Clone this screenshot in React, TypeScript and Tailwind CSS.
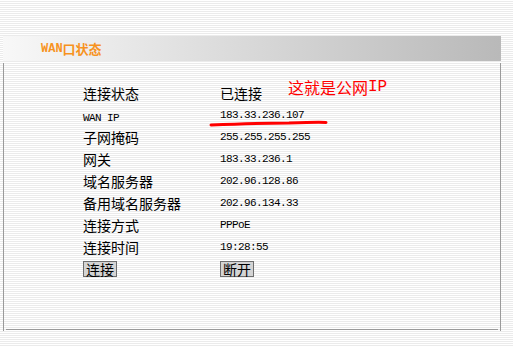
const rows: [string, string][] = [
  ['连接状态', '已连接'],
  ['WAN IP', '183.33.236.107'],
  ['子网掩码', '255.255.255.255'],
  ['网关', '183.33.236.1'],
  ['域名服务器', '202.96.128.86'],
  ['备用域名服务器', '202.96.134.33'],
  ['连接方式', 'PPPoE'],
  ['连接时间', '19:28:55'],
];

const cjk = "font-['Noto_Sans_CJK_SC',sans-serif]";
const mono = "font-['Liberation_Mono','Noto_Sans_CJK_SC',monospace]";

function Cell({ text }: { text: string }) {
  // ascii-only values are rendered in the narrow mono face
  const ascii = /^[\x20-\x7e]+$/.test(text);
  return ascii ? (
    <span className={`${mono} text-[11px] tracking-[-0.6px] text-black`}>{text}</span>
  ) : (
    <span className={`${cjk} text-[14px] text-black`}>{text}</span>
  );
}

function Btn({ children }: { children: React.ReactNode }) {
  return (
    <button
      className={`${cjk} w-[34px] h-[16px] bg-[#d4d4d4] border border-[#6e6e6e] text-[14px] leading-none text-black flex items-center justify-center`}
    >
      {children}
    </button>
  );
}

export default function App() {
  return (
    <div className="relative w-[513px] h-[347px] overflow-hidden bg-[repeating-linear-gradient(to_bottom,#ffffff_0px,#ffffff_1px,#ebebeb_1px,#ebebeb_2px)] pt-[36px]">
      <div className="ml-[3px] w-[498px] h-[25px] bg-gradient-to-r from-[#f8f8f8] to-[#b9b9b9] flex items-center pl-[38px]">
        <span className={`${mono} font-bold text-[12px] text-[#f7931e]`}>WAN</span>
        <span className={`${cjk} font-bold text-[13px] text-[#f7931e]`}>口状态</span>
      </div>

      <div className="relative mt-[2px] ml-[3px] w-[498px] h-[268px] border-l border-r border-[#9a9a9a] flex flex-col">
        <div className="flex-1 pt-[19px] pl-[79px]">
          {rows.map(([k, v]) => (
            <div key={k} className="h-[22px] flex items-center">
              <div className="w-[137px]">
                <Cell text={k} />
              </div>
              <Cell text={v} />
            </div>
          ))}
          <div className="h-[22px] flex items-center">
            <div className="w-[137px]">
              <Btn>连接</Btn>
            </div>
            <Btn>断开</Btn>
          </div>
        </div>
        <div className="mx-[2px] mb-[1px] border-b border-[#9a9a9a]" />

        {/* hand-drawn annotation */}
        <div className="absolute left-[284px] top-[16px] flex items-center text-[#ff0000] text-[16px] leading-none">
          <span className={cjk}>这就是公网</span>
          <span className={mono}>IP</span>
        </div>
        <svg className="absolute left-0 top-0" width="498" height="268">
          <path
            d="M207 62 C 230 61, 260 60, 285 60 C 300 59.5, 315 59, 322 59.5"
            stroke="#ff0000"
            strokeWidth="3"
            strokeLinecap="round"
            fill="none"
          />
        </svg>
      </div>
    </div>
  );
}
